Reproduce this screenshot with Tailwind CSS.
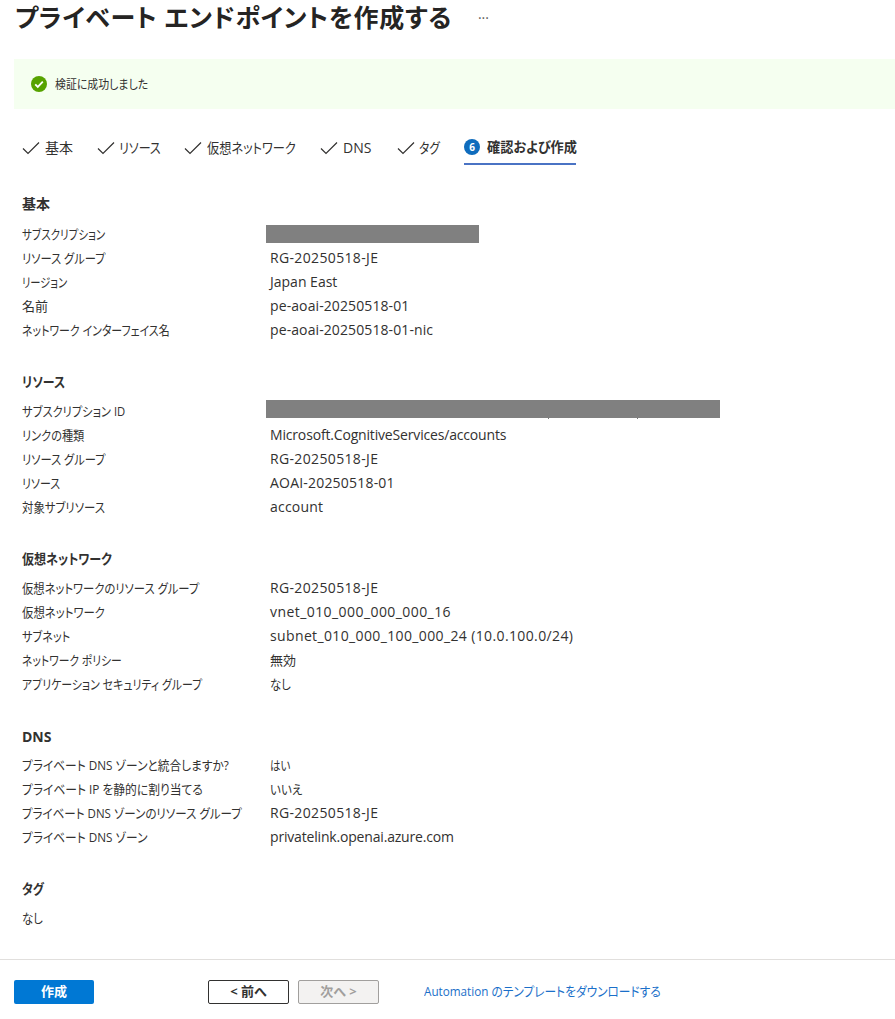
<!DOCTYPE html>
<html lang="ja">
  <head>
    <meta charset="UTF-8" />
    <title>プライベート エンドポイントを作成する</title>
    <script src="https://cdn.jsdelivr.net/npm/@tailwindcss/browser@4"></script>
  </head>
  <body class="bg-white text-[#323130] text-[13px] font-['Open_Sans','Noto_Sans_CJK_JP',sans-serif] [font-feature-settings:'palt']">
    <div class="w-[895px] h-[1019px] overflow-hidden flex flex-col">
      <!-- Title -->
      <div class="h-[59px] pl-[15px] flex items-start pt-[1px]">
        <h1 class="text-[25px] leading-[32px] font-bold text-[#252423] tracking-[0.7px] whitespace-nowrap">プライベート エンドポイントを作成する</h1>
        <span class="ml-[26px] mt-[6px] text-[14px] text-[#605e5c]">···</span>
      </div>

      <!-- Validation banner -->
      <div class="ml-[14px] h-[50px] bg-[#f5fff0] flex items-center pl-[17px] gap-[8px]">
        <svg width="16" height="16" viewBox="0 0 16 16">
          <circle cx="8" cy="8" r="8" fill="#57a300" />
          <path d="M4.2 8.3l2.6 2.6 5-5.3" fill="none" stroke="#fff" stroke-width="1.8" />
        </svg>
        <span class="text-[12px] mt-[1px] origin-left scale-x-[0.91]">検証に成功しました</span>
      </div>

      <!-- Tabs -->
      <div class="h-[34px] mt-[22px] ml-[22px] flex items-start text-[14px] leading-[34px]">
        <div class="flex items-center h-[34px] w-[75px] gap-[5px]">
          <svg width="18" height="14" viewBox="0 0 18 14"><path d="M1 7.5l5 5L17 1.5" fill="none" stroke="#323130" stroke-width="1.2" /></svg>
          <span>基本</span>
        </div>
        <div class="flex items-center h-[34px] w-[87px] gap-[4px]">
          <svg width="18" height="14" viewBox="0 0 18 14"><path d="M1 7.5l5 5L17 1.5" fill="none" stroke="#323130" stroke-width="1.2" /></svg>
          <span class="origin-left scale-x-[0.857]">リソース</span>
        </div>
        <div class="flex items-center h-[34px] w-[136px] gap-[5px]">
          <svg width="18" height="14" viewBox="0 0 18 14"><path d="M1 7.5l5 5L17 1.5" fill="none" stroke="#323130" stroke-width="1.2" /></svg>
          <span class="origin-left scale-x-[0.87]">仮想ネットワーク</span>
        </div>
        <div class="flex items-center h-[34px] w-[77px] gap-[5px]">
          <svg width="18" height="14" viewBox="0 0 18 14"><path d="M1 7.5l5 5L17 1.5" fill="none" stroke="#323130" stroke-width="1.2" /></svg>
          <span>DNS</span>
        </div>
        <div class="flex items-center h-[34px] w-[67px] gap-[4px]">
          <svg width="18" height="14" viewBox="0 0 18 14"><path d="M1 7.5l5 5L17 1.5" fill="none" stroke="#323130" stroke-width="1.2" /></svg>
          <span class="origin-left scale-x-[0.84]">タグ</span>
        </div>
        <div class="flex items-center h-[34px] w-[112px] gap-[7px] border-b-2 border-[#4a73c4] font-bold">
          <span class="shrink-0 w-[16px] h-[16px] rounded-full bg-[#0f6cbd] text-white text-[10px] leading-[16px] text-center">6</span>
          <span class="w-[89px] shrink-0 origin-left scale-x-[0.94] whitespace-nowrap">確認および作成</span>
        </div>
      </div>

      <!-- Summary -->
      <div class="pl-[22px] mt-[27px] flex-1">
        <section class="mb-[28px]">
          <h2 class="h-[24px] leading-[24px] font-bold mb-[6px] text-[14px]">基本</h2>
          <div class="flex h-[24px] leading-[24px]"><span class="w-[248px] shrink-0 whitespace-nowrap origin-left scale-x-[0.81]">サブスクリプション</span><span class="ml-[-4px] mt-[3px] w-[213px] h-[18px] bg-[#808080]"></span></div>
          <div class="flex h-[24px] leading-[24px]"><span class="w-[248px] shrink-0 whitespace-nowrap origin-left scale-x-[0.865]">リソース グループ</span><span class="text-[14px] tracking-[0.35px]">RG-20250518-JE</span></div>
          <div class="flex h-[24px] leading-[24px]"><span class="w-[248px] shrink-0 whitespace-nowrap origin-left scale-x-[0.79]">リージョン</span><span class="text-[14px]">Japan East</span></div>
          <div class="flex h-[24px] leading-[24px]"><span class="w-[248px] shrink-0 whitespace-nowrap">名前</span><span class="text-[14px] tracking-[0.1px]">pe-aoai-20250518-01</span></div>
          <div class="flex h-[24px] leading-[24px]"><span class="w-[248px] shrink-0 whitespace-nowrap origin-left scale-x-[0.84]">ネットワーク インターフェイス名</span><span class="text-[14px] tracking-[0.1px]">pe-aoai-20250518-01-nic</span></div>
        </section>

        <section class="mb-[28px]">
          <h2 class="h-[24px] leading-[24px] font-bold mb-[5px] text-[14px] origin-left scale-x-[0.85]">リソース</h2>
          <div class="flex h-[24px] leading-[24px]">
            <span class="w-[248px] shrink-0 whitespace-nowrap origin-left scale-x-[0.865]">サブスクリプション ID</span>
            <span class="relative ml-[-4px] mt-[1px] w-[454px] h-[18px] bg-[#808080]">
              <span class="absolute left-[282px] top-[18px] w-[1px] h-[1px] bg-[#777]"></span>
              <span class="absolute left-[371px] top-[18px] w-[1px] h-[1px] bg-[#777]"></span>
            </span>
          </div>
          <div class="flex h-[24px] leading-[24px]"><span class="w-[248px] shrink-0 whitespace-nowrap origin-left scale-x-[0.86]">リンクの種類</span><span class="text-[14px] tracking-[-0.17px]">Microsoft.CognitiveServices/accounts</span></div>
          <div class="flex h-[24px] leading-[24px]"><span class="w-[248px] shrink-0 whitespace-nowrap origin-left scale-x-[0.865]">リソース グループ</span><span class="text-[14px] tracking-[0.35px]">RG-20250518-JE</span></div>
          <div class="flex h-[24px] leading-[24px]"><span class="w-[248px] shrink-0 whitespace-nowrap origin-left scale-x-[0.84]">リソース</span><span class="text-[14px] tracking-[0.2px]">AOAI-20250518-01</span></div>
          <div class="flex h-[24px] leading-[24px]"><span class="w-[248px] shrink-0 whitespace-nowrap origin-left scale-x-[0.875]">対象サブリソース</span><span class="text-[14px] tracking-[0.2px]">account</span></div>
        </section>

        <section class="mb-[28px]">
          <h2 class="h-[24px] leading-[24px] font-bold mb-[5px] text-[14px] origin-left scale-x-[0.86]">仮想ネットワーク</h2>
          <div class="flex h-[24px] leading-[24px]"><span class="w-[248px] shrink-0 whitespace-nowrap origin-left scale-x-[0.87]">仮想ネットワークのリソース グループ</span><span class="text-[14px] tracking-[0.35px]">RG-20250518-JE</span></div>
          <div class="flex h-[24px] leading-[24px]"><span class="w-[248px] shrink-0 whitespace-nowrap origin-left scale-x-[0.875]">仮想ネットワーク</span><span class="text-[14px] tracking-[0.43px]">vnet_010_000_000_000_16</span></div>
          <div class="flex h-[24px] leading-[24px]"><span class="w-[248px] shrink-0 whitespace-nowrap origin-left scale-x-[0.857]">サブネット</span><span class="text-[14px] tracking-[0.37px]">subnet_010_000_100_000_24 (10.0.100.0/24)</span></div>
          <div class="flex h-[24px] leading-[24px]"><span class="w-[248px] shrink-0 whitespace-nowrap origin-left scale-x-[0.83]">ネットワーク ポリシー</span><span>無効</span></div>
          <div class="flex h-[24px] leading-[24px]"><span class="w-[248px] shrink-0 whitespace-nowrap origin-left scale-x-[0.84]">アプリケーション セキュリティ グループ</span><span class="origin-left scale-x-[0.88]">なし</span></div>
        </section>

        <section class="mb-[27px]">
          <h2 class="h-[24px] leading-[26px] font-bold mb-[5px] text-[14px]">DNS</h2>
          <div class="flex h-[24px] leading-[24px]"><span class="w-[248px] shrink-0 whitespace-nowrap origin-left scale-x-[0.9]">プライベート DNS ゾーンと統合しますか?</span><span class="origin-left scale-x-[0.81]">はい</span></div>
          <div class="flex h-[24px] leading-[24px]"><span class="w-[248px] shrink-0 whitespace-nowrap origin-left scale-x-[0.905]">プライベート IP を静的に割り当てる</span><span class="origin-left scale-x-[0.89]">いいえ</span></div>
          <div class="flex h-[24px] leading-[24px]"><span class="w-[248px] shrink-0 whitespace-nowrap origin-left scale-x-[0.885]">プライベート DNS ゾーンのリソース グループ</span><span class="text-[14px] tracking-[0.35px]">RG-20250518-JE</span></div>
          <div class="flex h-[24px] leading-[24px]"><span class="w-[248px] shrink-0 whitespace-nowrap origin-left scale-x-[0.9]">プライベート DNS ゾーン</span><span class="text-[14px] tracking-[-0.18px]">privatelink.openai.azure.com</span></div>
        </section>

        <section>
          <h2 class="h-[24px] leading-[26px] font-bold mb-[6px] text-[14px] origin-left scale-x-[0.84]">タグ</h2>
          <div class="h-[24px] leading-[24px] origin-left scale-x-[0.88]">なし</div>
        </section>
      </div>

      <!-- Footer -->
      <div class="h-[60px] border-t border-[#e1dfdd] flex items-start pt-[20px] pl-[14px] text-[13px]">
        <button class="w-[80px] h-[24px] bg-[#0078d4] rounded-[2px] text-white font-bold">作成</button>
        <button class="ml-[114px] w-[81px] h-[24px] border border-[#323130] rounded-[2px] font-bold">&lt; 前へ</button>
        <button class="ml-[9px] w-[81px] h-[24px] border border-[#a19f9d] bg-[#f3f2f1] rounded-[2px] font-bold text-[#a19f9d]">次へ &gt;</button>
        <a class="ml-[45px] leading-[23px] text-[#1a6fc9] whitespace-nowrap origin-left scale-x-[0.9]">Automation のテンプレートをダウンロードする</a>
      </div>
    </div>
  </body>
</html>
